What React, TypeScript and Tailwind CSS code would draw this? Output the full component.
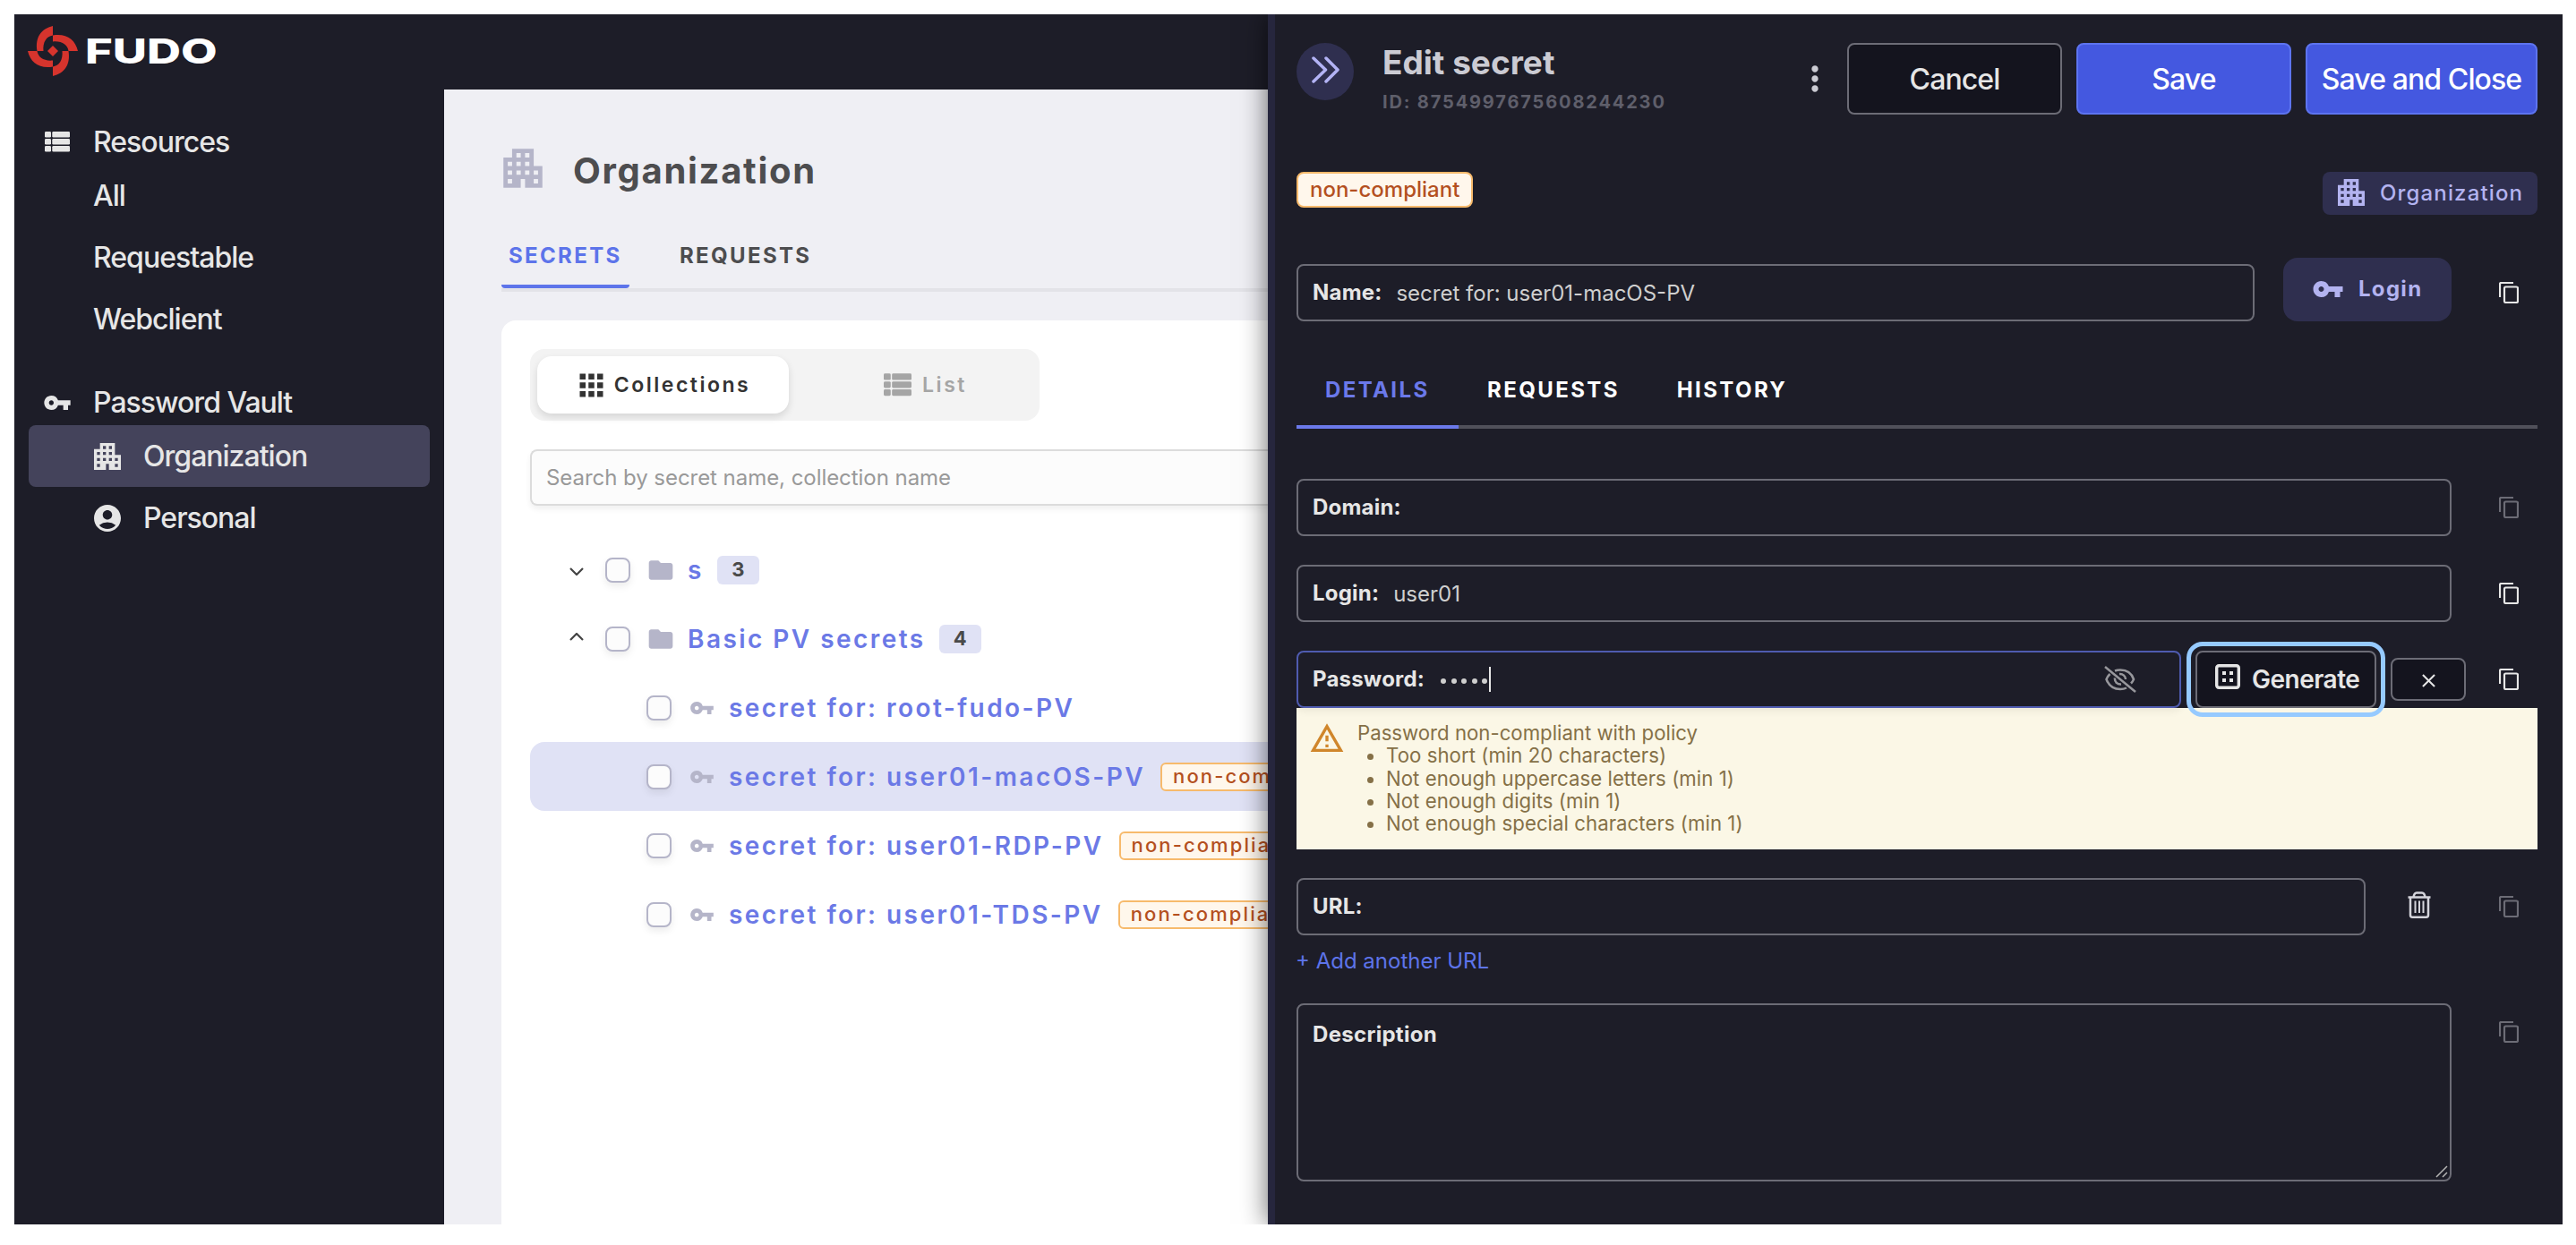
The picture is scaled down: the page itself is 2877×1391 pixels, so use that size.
import type { ReactNode } from "react";
import {
  MdAccountCircle,
  MdApartment,
  MdApps,
  MdFolder,
  MdMoreVert,
  MdOutlineWarningAmber,
  MdVpnKey,
} from "react-icons/md";

type IconProps = { className?: string };

const ListIcon = ({ className = "" }: IconProps) => (
  <svg className={className} viewBox="0 0 28 23" fill="currentColor">
    {[0, 8, 16].map((y) => (
      <g key={y}>
        <rect x="0" y={y} width="7" height="6.600" rx="1.300" />
        <rect x="8.300" y={y} width="19.700" height="6.600" rx="1.300" />
      </g>
    ))}
  </svg>
);

const CopyIcon = ({ className = "" }: IconProps) => (
  <svg
    className={`h-6 w-[22px] shrink-0 ${className}`}
    viewBox="0 0 22 24"
    fill="none"
    stroke="currentColor"
    strokeWidth={2.2}
  >
    <path d="M1 17V2.5C1 1.7 1.7 1 2.5 1H16" />
    <rect x="6" y="5.5" width="15" height="17.5" rx="1.5" />
  </svg>
);

const TrashIcon = ({ className = "" }: IconProps) => (
  <svg
    className={className}
    viewBox="0 0 26 30"
    fill="none"
    stroke="currentColor"
    strokeWidth={2.5}
  >
    <path d="M0.500 6.500h25M6.500 6.500C7 3 8 1.500 10 1.500h6C18 1.500 19 3 19.500 6.500M3 6.500v20q0 2.200 2.200 2.200h15.600q2.200 0 2.200-2.200v-20" />
    <path strokeWidth={2} d="M8.500 10.500v13.500M13 10.500v13.500M17.500 10.500v13.500" />
  </svg>
);

const EyeOffIcon = ({ className = "" }: IconProps) => (
  <svg
    className={className}
    viewBox="0 0 36 30"
    fill="none"
    stroke="currentColor"
    strokeWidth={2.5}
  >
    <path d="M1 1l34 28" />
    <path d="M12 5.500C14 4.700 16 4.500 18 4.500c8 0 13 4.500 15 10.500-.8 1.800-1.700 3.200-3 4.500M25 24.500c-2 1-4.500 1.500-7 1.500-8 0-13-4.500-15.500-11C3.500 12.500 5 10.500 6.500 9" />
    <path d="M17 9c4-.3 7 2.500 7 6M12 13.500c-.5 4.500 3 7.300 7 7" />
  </svg>
);

const Logo = () => (
  <div className="flex items-center gap-2">
    <svg className="h-14 w-14" viewBox="0 0 56 56">
      <g fill="#d6342d">
        <path d="M28 0v10.500C21 11.500 16.500 18 17.500 28H10.500C8 13 15 3 28 0z" />
        <path d="M56 28H45.500C44.500 21 38 16.500 28 17.500V10.500C43 8 53 15 56 28z" />
        <path d="M28 56V45.500C35 44.500 39.500 38 38.500 28h7C48 43 41 53 28 56z" />
        <path d="M0 28h10.500C11.500 35 18 39.500 28 38.500v7C13 48 3 41 0 28z" />
        <path d="M28 22l6 6-6 6-6-6z" />
      </g>
    </svg>
    <span className="origin-left scale-x-[1.385] text-[38px] leading-none font-extrabold text-white">
      FUDO
    </span>
  </div>
);

const NavItem = ({
  icon,
  label,
  active = false,
}: {
  icon?: ReactNode;
  label: string;
  active?: boolean;
}) => (
  <div
    className={`flex h-[69px] items-center rounded-lg pl-[72px] ${
      active ? "bg-[#44435b]" : ""
    }`}
  >
    {icon && (
      <span className="mr-5 -ml-1 flex w-10 justify-center">{icon}</span>
    )}
    <span>{label}</span>
  </div>
);

const NavHeader = ({ icon, label }: { icon: ReactNode; label: string }) => (
  <div className="flex h-[49px] items-center pl-4">
    <span className="flex w-14">{icon}</span>
    <span>{label}</span>
  </div>
);

const Sidebar = () => (
  <aside className="w-[480px] shrink-0 px-4 pt-[34px] text-[32px] font-[450] tracking-[-1px] text-[#e6e6e6]">
    <NavHeader
      icon={<ListIcon className="ml-0.5 h-[23px] w-7" />}
      label="Resources"
    />
    <div className="mt-px">
      <NavItem label="All" />
      <NavItem label="Requestable" />
      <NavItem label="Webclient" />
    </div>
    <div className="mt-[34px]">
      <NavHeader icon={<MdVpnKey className="size-8" />} label="Password Vault" />
      <div className="mt-px">
        <NavItem
          active
          label="Organization"
          icon={<MdApartment className="size-10" />}
        />
        <NavItem
          label="Personal"
          icon={<MdAccountCircle className="size-9" />}
        />
      </div>
    </div>
  </aside>
);

const Checkbox = () => (
  <span className="size-7 shrink-0 rounded-lg border-2 border-[#b5b5c9] bg-[#fcfcfc] shadow-[0_4px_8px_rgba(0,0,0,0.08)]" />
);

const Chevron = ({ open }: { open: boolean }) => (
  <svg
    className={`h-[9px] w-4 shrink-0 ${open ? "mb-1" : "mt-1"}`}
    viewBox="0 0 16 9"
    fill="none"
    stroke="#444"
    strokeWidth={2.2}
  >
    <path d={open ? "M1 8l7-7 7 7" : "M1 1l7 7 7-7"} />
  </svg>
);

const FolderRow = ({
  name,
  count,
  open,
}: {
  name: string;
  count: number;
  open: boolean;
}) => (
  <div className="flex h-[77px] items-center pl-11">
    <Chevron open={open} />
    <span className="ml-6 flex">
      <Checkbox />
    </span>
    <MdFolder className="ml-[18px] size-8 shrink-0 text-[#b5b5c9]" />
    <span className="ml-3.5">{name}</span>
    <span className="ml-[15px] flex h-8 w-[47px] items-center justify-center rounded-md bg-[#e0e2f5] text-[22px] tracking-[0] font-bold text-[#4a4a4a]">
      {count}
    </span>
  </div>
);

const SecretRow = ({
  name,
  selected = false,
  nonCompliant = true,
}: {
  name: string;
  selected?: boolean;
  nonCompliant?: boolean;
}) => (
  <div
    className={`flex h-[77px] items-center rounded-l-2xl pl-[130px] whitespace-nowrap ${
      selected ? "bg-[#e0e2f5]" : ""
    }`}
  >
    <Checkbox />
    <MdVpnKey className="ml-5 size-7 shrink-0 text-[#b5b5c9]" />
    <span className="ml-4">{name}</span>
    {nonCompliant && (
      <span className="ml-[17px] flex h-8 shrink-0 items-center rounded-md border-2 border-[#f7ba6c] bg-[#fff7ec] px-3 text-[22px] tracking-[2.100px] font-medium text-[#b4501f]">
        non-compliant
      </span>
    )}
  </div>
);

const Main = () => (
  <main className="min-w-0 flex-1 overflow-hidden bg-[#efeff4] pl-16">
    <div className="flex h-[222px] flex-col">
      <div className="flex items-center pt-[59px]">
        <MdApartment className="-ml-[5px] size-[58px] text-[#b5b5c9]" />
        <h1 className="ml-[27px] pt-1.5 text-[40px] leading-[52px] font-bold tracking-[1.700px] text-[#4d4d4f]">
          Organization
        </h1>
      </div>
      <div className="mt-auto flex text-[24px] leading-8 font-bold tracking-[2.350px]">
        <div className="h-[52px] w-[143px] rounded-b-sm border-b-4 border-[#5d74ea] pl-2 text-[#5d74ea]">
          SECRETS
        </div>
        <div className="pl-14 text-[#4d4d4f]">REQUESTS</div>
      </div>
    </div>
    <div className="h-1 bg-[#e3e3e8]" />
    <section className="mt-8 h-[1010px] rounded-tl-2xl bg-white pt-8 pl-8">
      <div className="flex h-20 w-[569px] rounded-2xl bg-[#f3f3f3] p-2 text-[23px] font-semibold">
        <div className="flex w-[281px] items-center justify-center gap-1.5 rounded-2xl bg-white pr-0.5 tracking-[2.500px] text-[#333] shadow-[0_4px_8px_rgba(0,0,0,0.12)]">
          <MdApps className="size-[39px]" />
          Collections
        </div>
        <div className="flex flex-1 items-center justify-center gap-3 pl-[33px] tracking-[2.500px] text-[#a5a5a5]">
          <ListIcon className="h-[26px] w-[31px]" />
          List
        </div>
      </div>
      <div className="mt-8 flex h-[63px] items-center rounded-l-lg border-2 border-r-0 border-[#dcdcdc] bg-[#fcfcfc] pl-4 text-[24px] tracking-[-0.050px] text-[#999] shadow-[0_4px_6px_rgba(0,0,0,0.06)]">
        Search by secret name, collection name
      </div>
      <div className="mt-[33px] text-[28px] font-semibold tracking-[2.450px] text-[#6b79e6]">
        <FolderRow name="s" count={3} open={false} />
        <FolderRow name="Basic PV secrets" count={4} open />
        <SecretRow name="secret for: root-fudo-PV" nonCompliant={false} />
        <SecretRow name="secret for: user01-macOS-PV" selected />
        <SecretRow name="secret for: user01-RDP-PV" />
        <SecretRow name="secret for: user01-TDS-PV" />
      </div>
    </section>
  </main>
);

const Field = ({
  label,
  value,
  className = "w-[1290px]",
}: {
  label: string;
  value?: string;
  className?: string;
}) => (
  <div
    className={`flex h-16 shrink-0 items-center rounded-lg border-2 border-[#6c6c76] pl-4 text-[24px] ${className}`}
  >
    <span className="font-bold tracking-[0.200px] text-[#e6e6e6]">{label}</span>
    <span className="ml-4 pt-0.5 text-[#cfcfcf]">{value}</span>
  </div>
);

const policyErrors = [
  "Too short (min 20 characters)",
  "Not enough uppercase letters (min 1)",
  "Not enough digits (min 1)",
  "Not enough special characters (min 1)",
];

const PanelHeader = () => (
  <header className="flex h-20 items-start">
    <div className="flex size-16 items-center justify-center rounded-full bg-[#2f2f4f]">
      <svg
        className="-mt-1 h-[30px] w-[32px]"
        viewBox="0 0 32 30"
        fill="none"
        stroke="#b3b3f5"
        strokeWidth={3.5}
        strokeLinecap="round"
        strokeLinejoin="round"
      >
        <path d="M3 2l13.500 13L3 28M17 2l13 13-13 13" />
      </svg>
    </div>
    <div className="ml-8">
      <h2 className="text-[37px] leading-[44px] font-bold text-[#cbcbd3]">
        Edit secret
      </h2>
      <p className="mt-[10px] text-[20px] leading-6 font-bold tracking-[1.850px] text-[#5f5f6b]">
        ID: 8754997675608244230
      </p>
    </div>
    <div className="ml-auto flex h-20 items-center gap-4 text-[32px] font-medium tracking-[-0.900px]">
      <MdMoreVert className="-mr-0.5 size-11 text-[#cbcbd3]" />
      <button className="h-20 w-60 rounded-lg border-2 border-[#6c6c76] bg-[#14141e] pt-0.5 text-[#e6e6e6]">
        Cancel
      </button>
      <button className="h-20 w-60 rounded-lg border-2 border-[#5d74f0] bg-[#4458e0] pt-0.5 text-white">
        Save
      </button>
      <button className="h-20 w-[259px] rounded-lg border-2 border-[#5d74f0] bg-[#4458e0] pt-0.5 text-white">
        Save and Close
      </button>
    </div>
  </header>
);

const Panel = () => (
  <div className="absolute top-0 right-0 h-[1352px] w-[1446px] border-l-8 border-[#26263d] bg-[#1d1d28] pt-8 pr-7 pl-6 shadow-[0_0_28px_rgba(0,0,0,0.6)]">
    <PanelHeader />

    <div className="mt-16 flex h-12 items-start justify-between">
      <span className="flex h-10 items-center rounded-lg border-2 border-[#f7ba6c] bg-[#fff7ec] px-[13px] text-[24px] font-medium text-[#b4501f]">
        non-compliant
      </span>
      <span className="flex h-12 w-60 items-center rounded-lg bg-[#2f2f4f] pl-3 text-[24px] font-medium tracking-[1.150px] text-[#b3b3f0]">
        <MdApartment className="-mt-0.5 mr-3 size-10" />
        Organization
      </span>
    </div>

    <div className="mt-12 flex h-[71px] items-end">
      <Field
        label="Name:"
        value="secret for: user01-macOS-PV"
        className="w-[1070px]"
      />
      <button className="ml-8 flex h-[71px] w-[188px] items-center rounded-2xl bg-[#2f2f4f] pb-0.5 pl-8 text-[24px] font-bold tracking-[1.300px] text-[#b3b3f0]">
        <MdVpnKey className="mr-4 size-9" />
        Login
      </button>
      <CopyIcon className="mb-5 ml-[53px] text-[#e6e6e6]" />
    </div>

    <div className="mt-12 flex h-[72px] border-b-4 border-[#50505a] text-[24px] leading-[58px] font-bold tracking-[2.400px] text-white">
      <div className="h-[72px] w-[181px] border-b-4 border-[#6b79ea] pl-8 text-[#6b79ea]">
        DETAILS
      </div>
      <div className="ml-8">REQUESTS</div>
      <div className="ml-16">HISTORY</div>
    </div>

    <div className="mt-14 flex items-center">
      <Field label="Domain:" />
      <CopyIcon className="ml-[53px] text-[#6c6c76]" />
    </div>
    <div className="mt-8 flex items-center">
      <Field label="Login:" value="user01" />
      <CopyIcon className="ml-[53px] text-[#e6e6e6]" />
    </div>
    <div className="mt-8 flex items-center">
      <div className="z-10 flex h-16 w-[988px] items-center rounded-lg border-2 border-[#4f5bb0] pl-4 text-[24px] shadow-[0_4px_8px_rgba(0,0,0,0.06)]">
        <span className="font-bold tracking-[0.200px] text-[#e6e6e6]">
          Password:
        </span>
        <span className="ml-[18px] flex gap-[5.500px] pt-1">
          {[0, 1, 2, 3, 4].map((i) => (
            <span key={i} className="size-1.5 rounded-full bg-[#cfcfcf]" />
          ))}
        </span>
        <span className="ml-0.5 h-7 w-0.5 bg-[#e6e6e6]" />
        <EyeOffIcon className="mr-12 ml-auto h-[30px] w-9 text-[#97979c]" />
      </div>
      <button className="z-10 ml-4 flex h-16 w-[202px] items-center rounded-lg border-2 border-[#6c6c76] bg-[#14141e] pl-5 text-[28px] font-semibold tracking-[-0.500px] text-[#e6e6e6] outline-[5px] outline-offset-[5px] outline-[#96caff]">
        <svg
          className="mr-[13px] -mt-1.5 size-7"
          viewBox="0 0 28 28"
          fill="none"
          stroke="currentColor"
        >
          <rect
            x="1.700"
            y="1.700"
            width="24.600"
            height="24.600"
            rx="2.500"
            strokeWidth={3.4}
          />
          <path d="M8 10h4M16 10h4M8 18h4M16 18h4" strokeWidth={4} />
        </svg>
        Generate
      </button>
      <button className="ml-4 flex h-12 w-[84px] items-center justify-center rounded-lg border-2 border-[#6c6c76] bg-[#14141e]">
        <svg
          className="mt-0.5 size-[15px]"
          viewBox="0 0 16 16"
          stroke="#e6e6e6"
          strokeWidth={2.2}
        >
          <path d="M1 1l14 14M15 1L1 15" />
        </svg>
      </button>
      <CopyIcon className="ml-[37px] text-[#e6e6e6]" />
    </div>

    <div className="flex h-[158px] bg-[#fbf7e6] pt-[15px] pl-3.5 text-[22.200px] leading-[25.300px] text-[#857047]">
      <MdOutlineWarningAmber className="-mt-px size-10 text-[#d0862b]" />
      <div className="ml-3.5">
        <p>Password non-compliant with policy</p>
        <ul className="list-disc pl-8 tracking-[0.050px]">
          {policyErrors.map((error) => (
            <li key={error}>{error}</li>
          ))}
        </ul>
      </div>
    </div>

    <div className="mt-8 flex items-center">
      <Field label="URL:" className="w-[1194px]" />
      <TrashIcon className="-mt-1 ml-[47px] h-[30px] w-[26px] text-[#d5d5dc]" />
      <CopyIcon className="ml-[76px] text-[#6c6c76]" />
    </div>
    <a className="-ml-px mt-[13px] block h-[33px] text-[24px] leading-8 text-[#5d74ea]">
      + Add another URL
    </a>

    <div className="mt-[30px] flex items-start">
      <div className="relative h-[199px] w-[1290px] rounded-lg border-2 border-[#6c6c76] pt-[17px] pl-4 text-[24px] leading-8 font-bold tracking-[0.300px] text-[#e6e6e6]">
        Description
        <svg
          className="absolute right-0.5 bottom-0.5 size-3.5"
          viewBox="0 0 14 14"
          stroke="#b5b5b5"
          strokeWidth={1.5}
        >
          <path d="M1 13L13 1M8 13l5-5" />
        </svg>
      </div>
      <CopyIcon className="mt-5 ml-[53px] text-[#6c6c76]" />
    </div>
  </div>
);

function App() {
  return (
    <div className="h-[1391px] w-[2877px] overflow-hidden bg-white p-4 font-['Inter',sans-serif]">
      <div className="relative flex h-[1352px] w-[2846px] flex-col overflow-hidden bg-[#1d1d28]">
        <header className="flex h-[84px] shrink-0 items-center pb-0.5 pl-[15px]">
          <Logo />
        </header>
        <div className="flex min-h-0 flex-1">
          <Sidebar />
          <Main />
        </div>
        <Panel />
      </div>
    </div>
  );
}

export default App;
